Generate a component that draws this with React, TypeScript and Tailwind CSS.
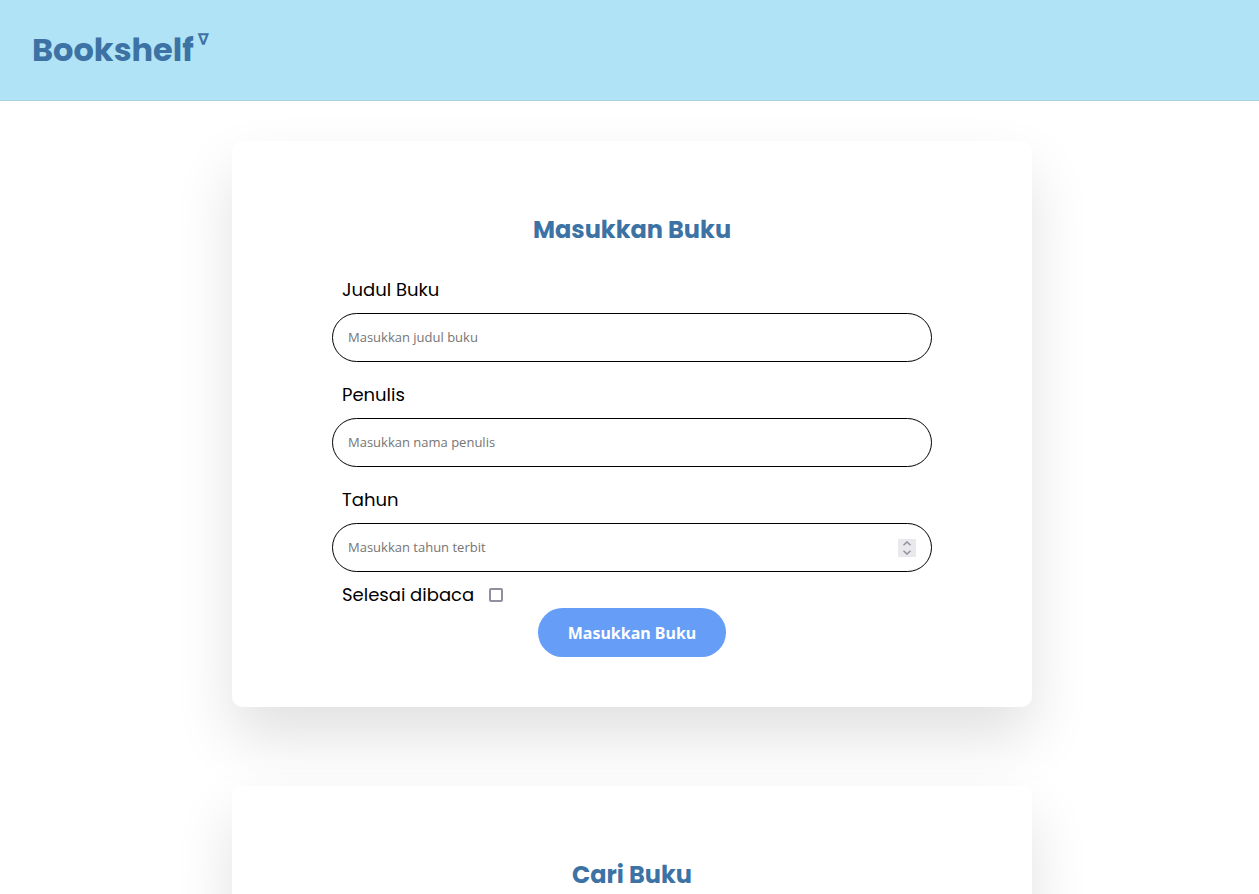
import type { ReactNode } from "react";
import { useRef } from "react";

const heading = "text-center font-['Poppins','Inter',sans-serif] text-2xl leading-9 font-bold text-[#3d72a4]";
const label = "font-['Poppins','Inter',sans-serif] text-lg text-black";
const box = "flex h-[49px] items-center rounded-[25px] border border-black bg-white px-[15px]";
const field =
  "min-w-0 flex-1 appearance-none bg-transparent font-['Open_Sans','Noto_Sans',sans-serif] text-[13px] text-black outline-none placeholder:text-[#757575] [&::-webkit-inner-spin-button]:appearance-none [&::-webkit-outer-spin-button]:appearance-none";

function Card({ title, children }: { title: string; children?: ReactNode }) {
  return (
    <section className="w-full max-w-[800px] rounded-[10px] bg-white px-[100px] pt-[71px] pb-[50px] shadow-[0_30px_60px_rgba(0,0,0,0.12)]">
      <h2 className={heading}>{title}</h2>
      {children}
    </section>
  );
}

function TextField({ id, title, hint }: { id: string; title: string; hint: string }) {
  return (
    <div className="flex flex-col gap-[11px]">
      <label htmlFor={id} className={`${label} ml-2.5 leading-[25px]`}>
        {title}
      </label>
      <div className={box}>
        <input id={id} type="text" placeholder={hint} className={field} />
      </div>
    </div>
  );
}

function YearField() {
  const input = useRef<HTMLInputElement>(null);
  return (
    <div className="flex flex-col gap-[11px]">
      <label htmlFor="year" className={`${label} ml-2.5 leading-[25px]`}>
        Tahun
      </label>
      <div className={box}>
        <input ref={input} id="year" type="number" placeholder="Masukkan tahun terbit" className={field} />
        <div className="flex h-[18px] w-[18px] flex-col bg-[#e9e9ed] text-[#8f8f9d]">
          <button type="button" aria-label="Tambah" className="flex flex-1 items-center justify-center" onClick={() => input.current?.stepUp()}>
            <svg width="8" height="5" viewBox="0 0 8 5" fill="none" stroke="currentColor" strokeWidth="1.4">
              <path d="M.5 4.2 4 .9l3.5 3.3" />
            </svg>
          </button>
          <button type="button" aria-label="Kurangi" className="flex flex-1 items-center justify-center" onClick={() => input.current?.stepDown()}>
            <svg width="8" height="5" viewBox="0 0 8 5" fill="none" stroke="currentColor" strokeWidth="1.4">
              <path d="M.5.8 4 4.1 7.5.8" />
            </svg>
          </button>
        </div>
      </div>
    </div>
  );
}

export default function App() {
  return (
    <div className="min-h-screen bg-white">
      <header className="flex h-[101px] items-center border-b border-[#a9d0de] bg-[#b0e3f5] px-8">
        <h1 className="flex items-start gap-1 font-['Poppins','Inter',sans-serif] text-[32px] leading-[48px] font-bold text-[#3d72a4]">
          <span>Bookshelf</span>
          <sup className="top-0 mt-1 font-['DejaVu_Sans',sans-serif] text-base leading-5 font-bold">∇</sup>
        </h1>
      </header>
      <main className="flex flex-col items-center gap-[79px] py-10 pl-[5px]">
        <Card title="Masukkan Buku">
          <form className="mt-[29px] flex flex-col" onSubmit={(e) => e.preventDefault()}>
            <div className="flex flex-col gap-5">
              <TextField id="title" title="Judul Buku" hint="Masukkan judul buku" />
              <TextField id="author" title="Penulis" hint="Masukkan nama penulis" />
              <YearField />
            </div>
            <div className="mt-[9px] ml-2.5 flex items-center gap-[15px]">
              <label htmlFor="done" className={`${label} leading-[27px]`}>
                Selesai dibaca
              </label>
              <input id="done" type="checkbox" className="size-3.5 appearance-none rounded-xs border-2 border-[#8f8f9d] bg-white checked:bg-[#669df6]" />
            </div>
            <button type="submit" className="h-[49px] self-center rounded-[25px] bg-[#669df6] px-[30px] font-['Noto_Sans','Open_Sans',sans-serif] text-base font-bold text-white">
              Masukkan Buku
            </button>
          </form>
        </Card>
        <Card title="Cari Buku" />
      </main>
    </div>
  );
}
